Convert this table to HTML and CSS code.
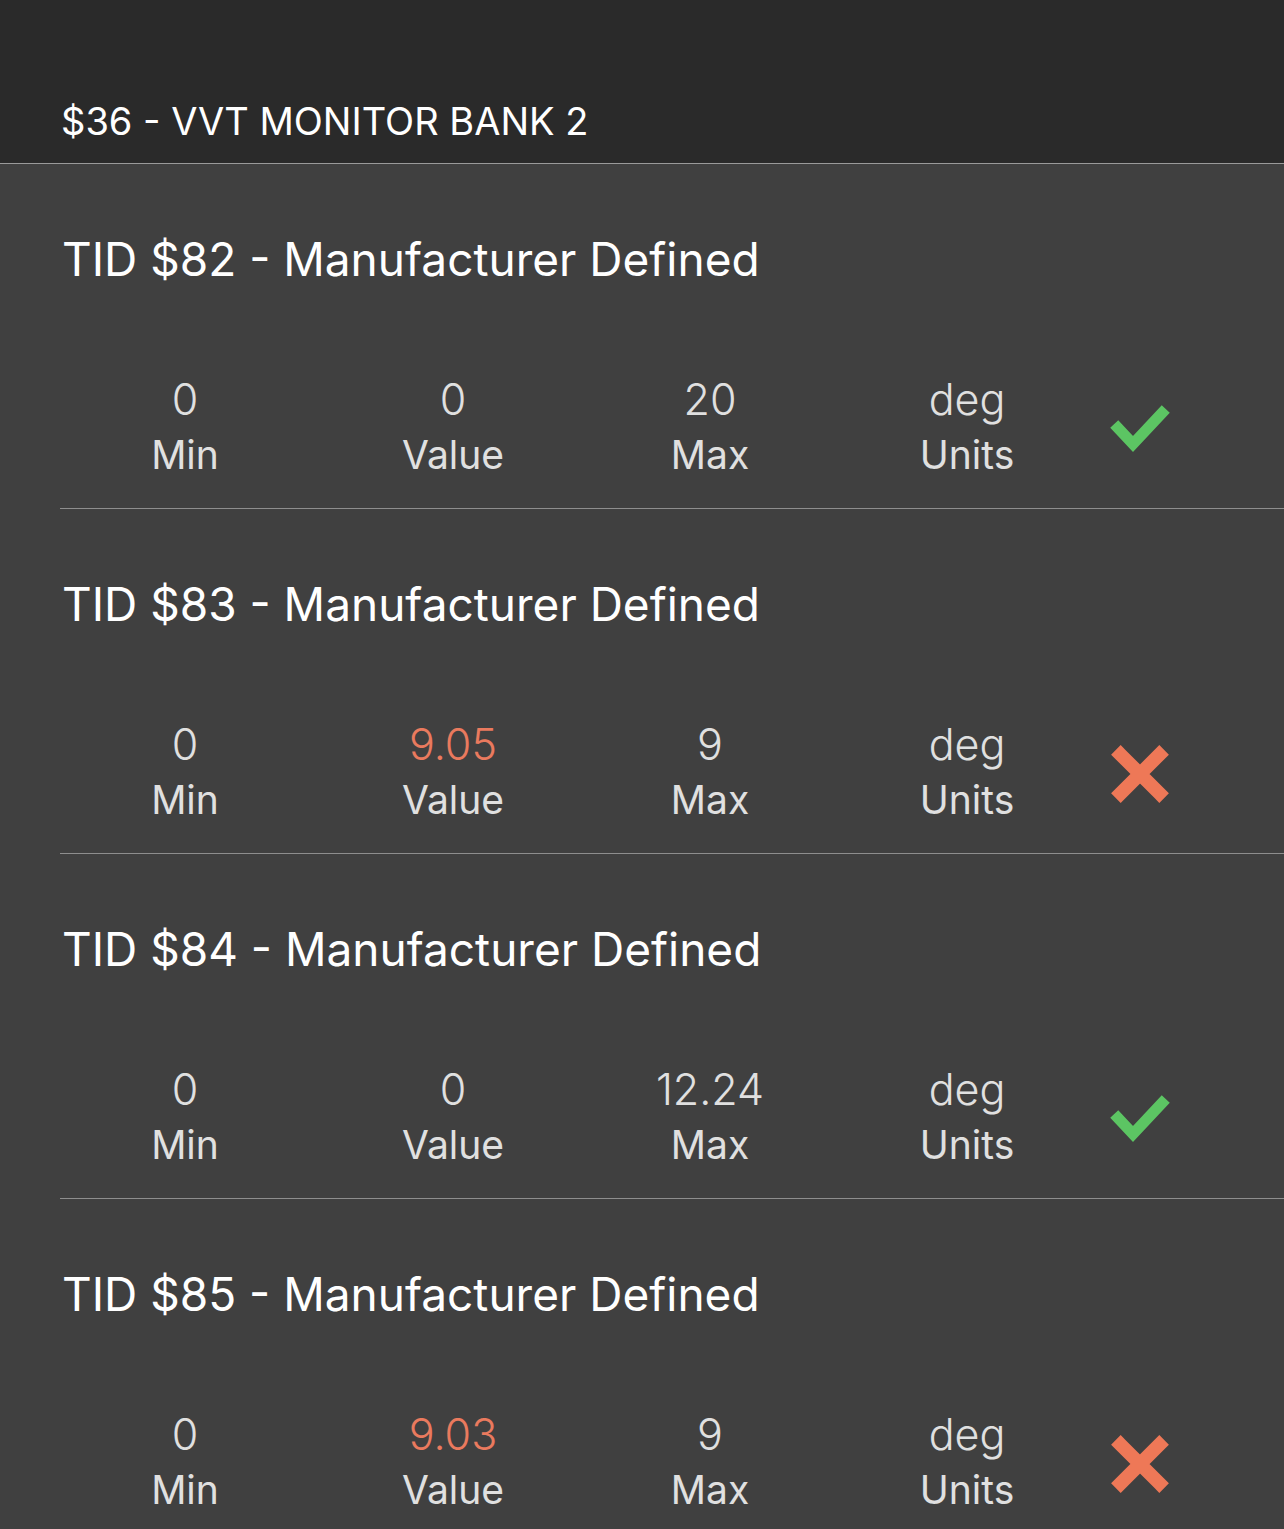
FILE: index.html
```html
<!DOCTYPE html>
<html lang="en">
<head>
    <meta charset="UTF-8">
    <meta name="viewport" content="width=device-width, initial-scale=1.0">
    <title>$36 - VVT Monitor Bank 2</title>
    <link rel="stylesheet" href="styles.css">
</head>
<body>

    <header class="topbar">
        <h1>$36 - VVT MONITOR BANK 2</h1>
    </header>

    <div class="tests">
        <div class="test">
            <h2>TID $82 - Manufacturer Defined</h2>
            <div class="metrics">
                <div class="metric"><span class="num">0</span><span class="label">Min</span></div>
                <div class="metric"><span class="num">0</span><span class="label">Value</span></div>
                <div class="metric"><span class="num">20</span><span class="label">Max</span></div>
                <div class="metric"><span class="num">deg</span><span class="label">Units</span></div>
                <div class="status">
                    <svg class="pass" viewBox="0 0 60 50"><polyline points="8,24 23,40 52,9"/></svg>
                </div>
            </div>
        </div>

        <div class="test">
            <h2>TID $83 - Manufacturer Defined</h2>
            <div class="metrics">
                <div class="metric"><span class="num">0</span><span class="label">Min</span></div>
                <div class="metric"><span class="num bad">9.05</span><span class="label">Value</span></div>
                <div class="metric"><span class="num">9</span><span class="label">Max</span></div>
                <div class="metric"><span class="num">deg</span><span class="label">Units</span></div>
                <div class="status">
                    <svg class="fail" viewBox="0 0 60 60"><path d="M10 10 L50 50 M50 10 L10 50"/></svg>
                </div>
            </div>
        </div>

        <div class="test">
            <h2>TID $84 - Manufacturer Defined</h2>
            <div class="metrics">
                <div class="metric"><span class="num">0</span><span class="label">Min</span></div>
                <div class="metric"><span class="num">0</span><span class="label">Value</span></div>
                <div class="metric"><span class="num">12.24</span><span class="label">Max</span></div>
                <div class="metric"><span class="num">deg</span><span class="label">Units</span></div>
                <div class="status">
                    <svg class="pass" viewBox="0 0 60 50"><polyline points="8,24 23,40 52,9"/></svg>
                </div>
            </div>
        </div>

        <div class="test">
            <h2>TID $85 - Manufacturer Defined</h2>
            <div class="metrics">
                <div class="metric"><span class="num">0</span><span class="label">Min</span></div>
                <div class="metric"><span class="num bad">9.03</span><span class="label">Value</span></div>
                <div class="metric"><span class="num">9</span><span class="label">Max</span></div>
                <div class="metric"><span class="num">deg</span><span class="label">Units</span></div>
                <div class="status">
                    <svg class="fail" viewBox="0 0 60 60"><path d="M10 10 L50 50 M50 10 L10 50"/></svg>
                </div>
            </div>
        </div>
    </div>

</body>
</html>
```

FILE: styles.css
```css
body {
    font-family: Inter, 'Noto Sans', sans-serif;
    background-color: #404040;
    margin: 0;
    overflow: hidden;
}
.topbar {
    background-color: #2a2a2a;
    height: 164px;
    border-bottom: 1px solid #9a9a9a;
    box-sizing: border-box;
    display: flex;
    align-items: flex-end;
    padding: 0 0 22px 61px;
}
.topbar h1 {
    color: #ffffff;
    font-size: 38px;
    font-weight: 400;
    line-height: 40px;
    margin: 0;
}
.tests {
    margin-left: 60px;
}
.test {
    height: 345px;
    box-sizing: border-box;
    border-bottom: 1px solid #8e8e8e;
    padding-top: 67px;
}
.test h2 {
    color: #ffffff;
    font-size: 46px;
    font-weight: 400;
    line-height: 56px;
    margin: 0 0 0 2px;
}
.metrics {
    display: grid;
    grid-template-columns: 250px 286px 228px 286px 60px;
    align-items: center;
    margin-top: 85px;
}
.metric {
    display: flex;
    flex-direction: column;
    align-items: center;
    color: #e0e0e0;
    font-size: 39px;
    line-height: 55px;
}
.num {
    font-size: 43px;
    font-weight: 300;
}
.num.bad {
    color: #ea7a5e;
}
.status {
    display: flex;
    justify-content: center;
    padding-top: 4px;
}
.status svg {
    fill: none;
    stroke-linejoin: miter;
}
.pass {
    width: 60px;
    height: 50px;
    stroke: #5cc563;
    stroke-width: 11;
    stroke-linecap: square;
}
.fail {
    width: 58px;
    height: 58px;
    stroke: #ee7857;
    stroke-width: 14;
    stroke-linecap: square;
}
```
